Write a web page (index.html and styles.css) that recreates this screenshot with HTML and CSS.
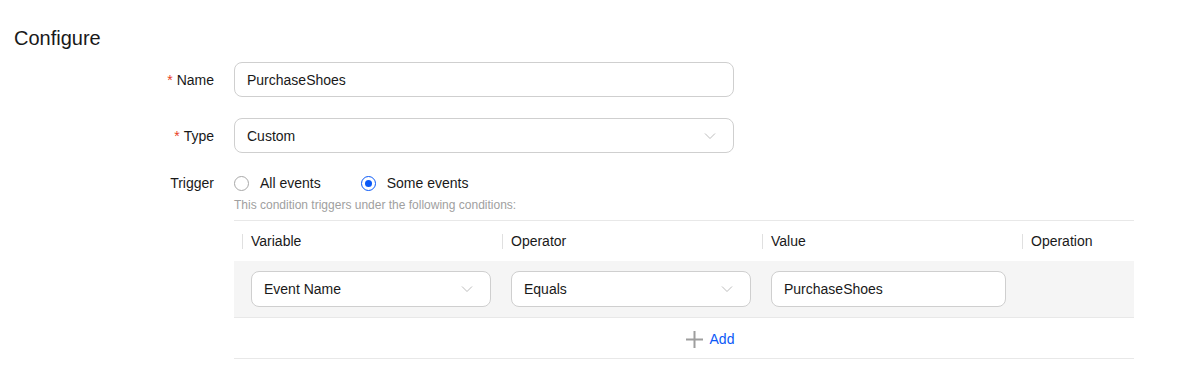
FILE: index.html
```html
<!DOCTYPE html>
<html lang="en">
<head>
    <meta charset="UTF-8">
    <title>Configure</title>
    <link rel="stylesheet" href="styles.css">
</head>
<body>
    <h2 class="title">Configure</h2>
    <div class="form">
        <div class="form-row">
            <label class="form-label"><span class="req">*</span>Name</label>
            <div class="field">PurchaseShoes</div>
        </div>
        <div class="form-row">
            <label class="form-label"><span class="req">*</span>Type</label>
            <div class="field select">Custom
                <svg class="chevron" width="12" height="8" viewBox="0 0 12 8"><path d="M1 1.5 L6 6.5 L11 1.5" fill="none" stroke="#bdbdbd" stroke-width="1"/></svg>
            </div>
        </div>
        <div class="form-row trigger-row">
            <label class="form-label">Trigger</label>
            <div class="trigger">
                <div class="radios">
                    <span class="radio"><span class="dot"></span>All events</span>
                    <span class="radio checked"><span class="dot"></span>Some events</span>
                </div>
                <div class="hint">This condition triggers under the following conditions:</div>
                <div class="cond-table">
                    <div class="cond-head">
                        <div class="th">Variable</div>
                        <div class="th">Operator</div>
                        <div class="th">Value</div>
                        <div class="th">Operation</div>
                    </div>
                    <div class="cond-row">
                        <div class="td">
                            <div class="field select small">Event Name
                                <svg class="chevron" width="12" height="8" viewBox="0 0 12 8"><path d="M1 1.5 L6 6.5 L11 1.5" fill="none" stroke="#bdbdbd" stroke-width="1"/></svg>
                            </div>
                        </div>
                        <div class="td">
                            <div class="field select small">Equals
                                <svg class="chevron" width="12" height="8" viewBox="0 0 12 8"><path d="M1 1.5 L6 6.5 L11 1.5" fill="none" stroke="#bdbdbd" stroke-width="1"/></svg>
                            </div>
                        </div>
                        <div class="td">
                            <div class="field small value">PurchaseShoes</div>
                        </div>
                        <div class="td"></div>
                    </div>
                    <div class="add-row">
                        <span class="add">
                            <svg width="19" height="19" viewBox="0 0 19 19"><path d="M9.5 1 V18 M1 9.5 H18" stroke="#9e9e9e" stroke-width="2"/></svg>
                            Add
                        </span>
                    </div>
                </div>
            </div>
        </div>
    </div>
</body>
</html>
```

FILE: styles.css
```css
body {
    margin: 0;
    font-family: 'Liberation Sans', Arial, sans-serif;
    color: #191919;
    background: #fff;
}

.title {
    margin: 24px 0 0 14px;
    font-size: 20px;
    font-weight: normal;
    line-height: 28px;
}

.form {
    margin-top: 10px;
}

.form-row {
    display: flex;
    align-items: center;
    gap: 20px;
    margin-bottom: 21px;
}

.form-label {
    width: 214px;
    text-align: right;
    font-size: 14px;
    flex-shrink: 0;
}

.req {
    color: #e84026;
    margin-right: 4px;
}

.field {
    box-sizing: border-box;
    width: 500px;
    height: 35px;
    border: 1px solid #cfcfcf;
    border-radius: 8px;
    padding: 0 12px;
    font-size: 14px;
    display: flex;
    align-items: center;
    justify-content: space-between;
    background: #fff;
}

.chevron {
    margin-right: 5px;
}

.trigger-row {
    align-items: flex-start;
}

.trigger-row .form-label {
    line-height: 18px;
}

.radios {
    display: flex;
    gap: 40px;
    font-size: 14px;
    line-height: 18px;
}

.radio {
    display: flex;
    align-items: center;
    gap: 11px;
}

.dot {
    box-sizing: border-box;
    width: 15px;
    height: 15px;
    border: 1px solid #a8a8a8;
    border-radius: 50%;
    position: relative;
}

.radio.checked .dot {
    border-color: #0a59f7;
}

.radio.checked .dot::after {
    content: "";
    position: absolute;
    left: 3px;
    top: 3px;
    width: 7px;
    height: 7px;
    border-radius: 50%;
    background: #0a59f7;
}

.hint {
    margin-top: 5px;
    font-size: 12px;
    line-height: 16px;
    color: #a0a0a0;
}

.cond-table {
    margin-top: 7px;
    width: 900px;
    border-top: 1px solid #e8e8e8;
}

.cond-head, .cond-row {
    display: grid;
    grid-template-columns: 260px 260px 260px 120px;
}

.cond-head {
    height: 40px;
    align-items: center;
    font-size: 14px;
}

.th {
    padding-left: 8px;
}

.th::before {
    content: "";
    display: inline-block;
    width: 1px;
    height: 15px;
    background: #e0e0e0;
    vertical-align: middle;
    margin-right: 8px;
    margin-top: -2px;
}

.cond-row {
    height: 56px;
    background: #f5f5f5;
    border-bottom: 1px solid #e8e8e8;
    align-items: center;
}

.td {
    padding-left: 17px;
}

.field.small {
    width: 240px;
    height: 36px;
}

.field.value {
    width: 235px;
}

.add-row {
    box-sizing: border-box;
    height: 41px;
    padding-top: 2px;
    border-bottom: 1px solid #e8e8e8;
    display: flex;
    align-items: center;
    justify-content: center;
}

.add {
    display: flex;
    align-items: center;
    gap: 6px;
    font-size: 14px;
    color: #0a59f7;
    margin-left: 51px;
}
```
